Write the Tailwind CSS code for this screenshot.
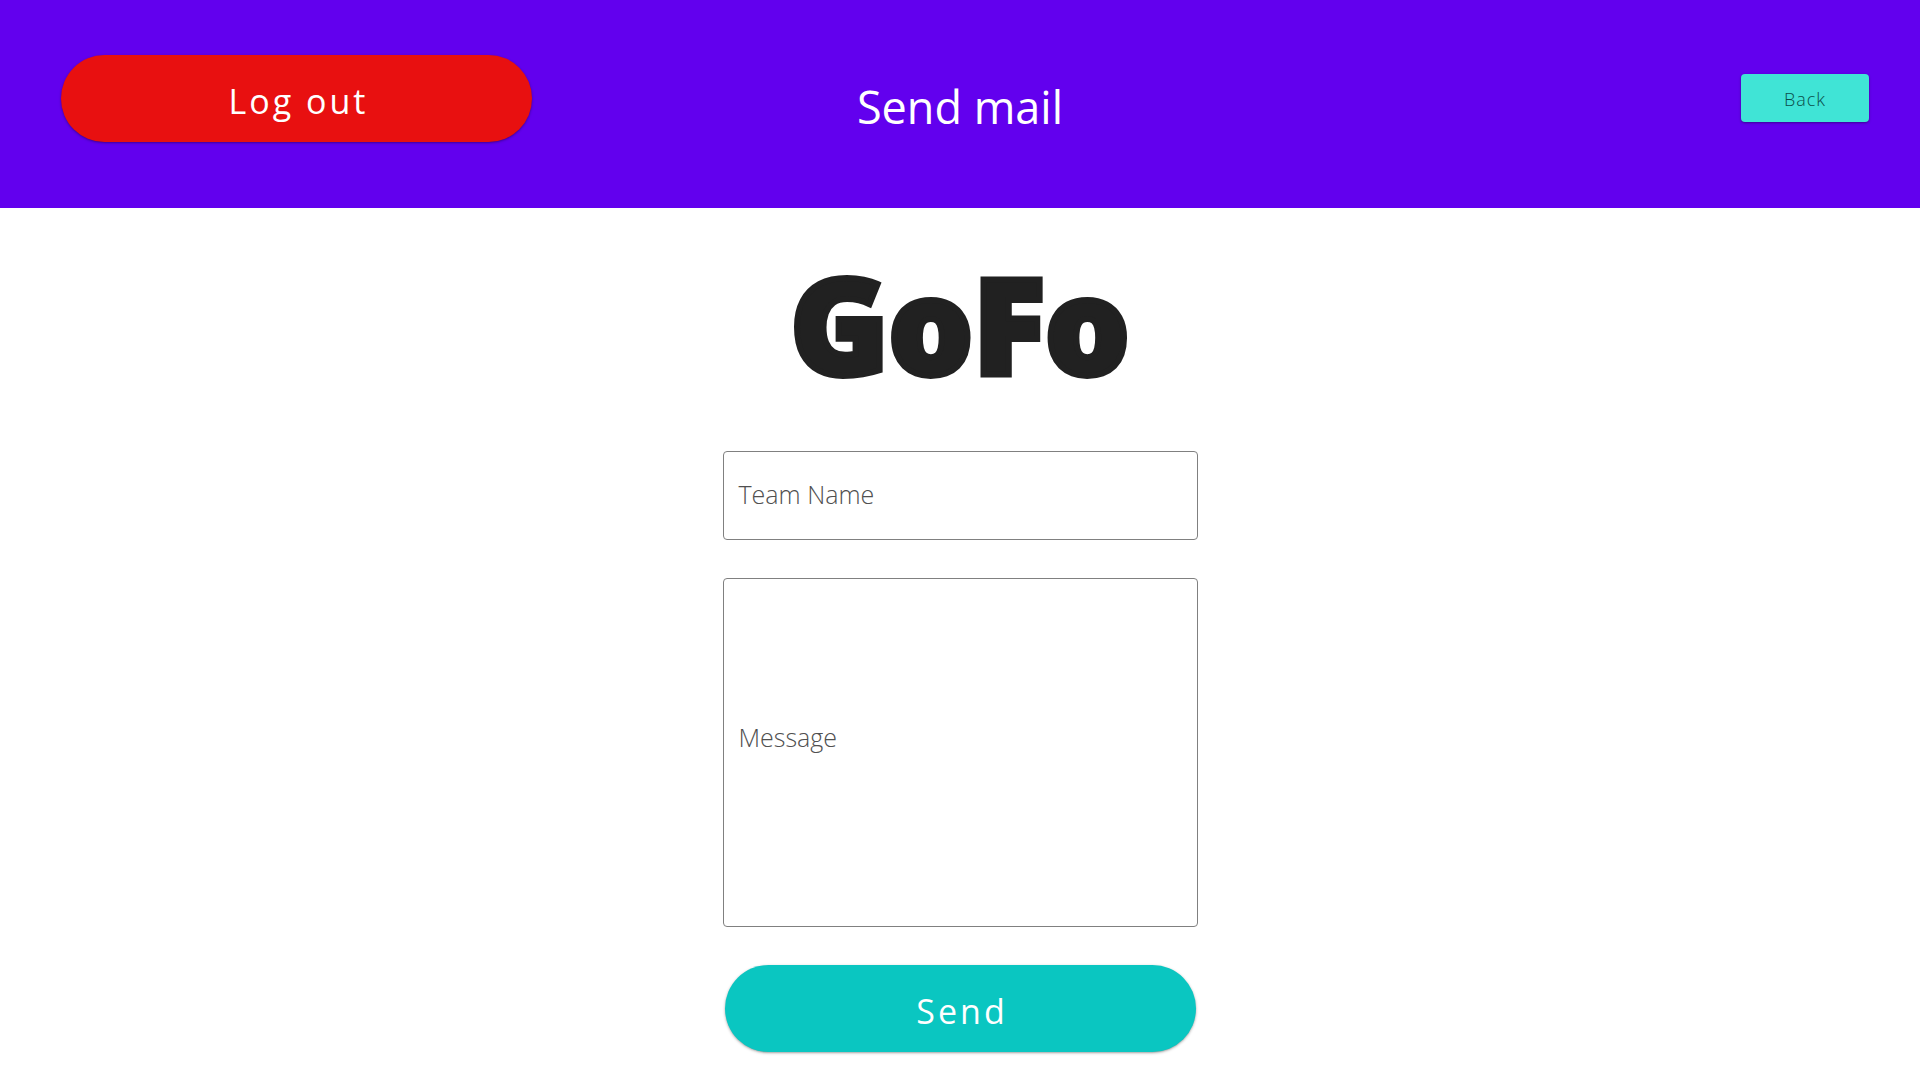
<!DOCTYPE html>
<html lang="en">
<head>
<meta charset="utf-8">
<title>Send mail</title>
<script src="https://cdn.jsdelivr.net/npm/@tailwindcss/browser@4"></script>
</head>
<body class="min-h-screen bg-white font-['Open_Sans','Noto_Sans',sans-serif]">
<header class="grid h-52 grid-cols-3 items-center bg-[#6200ee] px-[51px] pb-3">
  <button type="button" class="ml-[10px] h-[87px] w-full max-w-[471px] rounded-full bg-[#e81010] pt-1.5 pl-1 text-[34px] tracking-[3px] text-white shadow-sm shadow-black/30">Log out</button>
  <h1 class="pt-4 text-center text-[45px] leading-none text-white">Send mail</h1>
  <button type="button" class="h-12 w-32 justify-self-end rounded-sm bg-[#40e4d6] pt-0.5 text-[18px] font-light tracking-[1px] text-[#0c4f4a] shadow-sm shadow-black/30">Back</button>
</header>
<main class="mx-auto flex w-full max-w-[475px] flex-col">
  <p class="flex h-[243px] items-center justify-center pb-3 text-[133px] leading-none font-extrabold text-[#212121] [-webkit-text-stroke:6px_#212121]">GoFo</p>
  <form class="flex flex-col">
    <div class="grid h-[89px] items-center">
      <input id="team" type="text" class="col-start-1 row-start-1 h-full w-full rounded border border-[#808080] px-4 text-2xl">
      <label for="team" class="pointer-events-none col-start-1 row-start-1 pb-1 pl-4 text-[25px] leading-8 font-light text-[#505050]">Team Name</label>
    </div>
    <div class="mt-[38px] grid h-[349px] items-center">
      <textarea id="message" class="col-start-1 row-start-1 h-full w-full resize-none rounded border border-[#808080] p-4 text-2xl"></textarea>
      <label for="message" class="pointer-events-none col-start-1 row-start-1 pb-8 pl-4 text-[25px] leading-8 font-light text-[#505050]">Message</label>
    </div>
    <button type="button" class="mx-[2px] mt-[38px] h-[87px] rounded-full bg-[#0ac6c1] pt-1.5 pl-1 text-[34px] tracking-[3px] text-white shadow-sm shadow-black/30">Send</button>
  </form>
</main>
</body>
</html>
